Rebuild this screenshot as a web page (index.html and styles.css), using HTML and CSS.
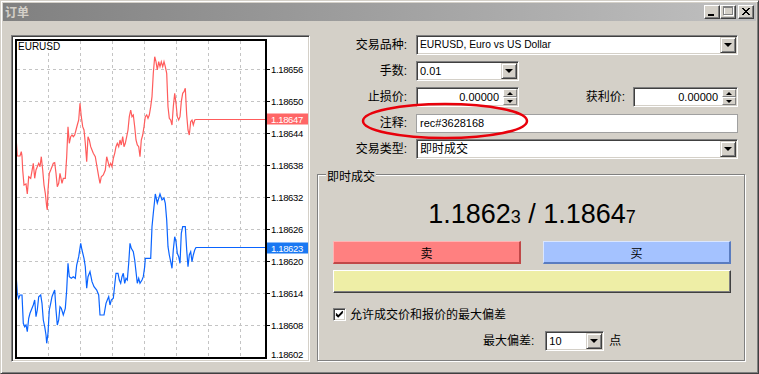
FILE: index.html
```html
<!DOCTYPE html>
<html lang="zh">

<head>
  <meta charset="UTF-8" />
  <title>订单</title>
  <link rel="stylesheet" href="styles.css">
</head>

<body>
  <div class="window">
    <!-- title bar -->
    <div class="titlebar">
      <span class="title">订单</span>
      <div class="caption-btns">
        <span class="cap-btn"><svg width="14" height="12" viewBox="0 0 14 12"><rect x="3" y="8" width="6" height="2" fill="#000"/></svg></span>
        <span class="cap-btn"><svg width="14" height="12" viewBox="0 0 14 12"><rect x="3.5" y="1.5" width="9" height="8" fill="none" stroke="#fff"/><rect x="2.5" y="0.5" width="9" height="8" fill="none" stroke="#808080"/><line x1="2" y1="1.5" x2="12" y2="1.5" stroke="#808080"/></svg></span>
        <span class="cap-btn close"><svg width="14" height="12" viewBox="0 0 14 12"><path d="M3 2 L10 9 M10 2 L3 9 M4 2 L11 9 M11 2 L4 9" stroke="#000" stroke-width="1"/></svg></span>
      </div>
    </div>

    <div class="content">
      <!-- tick chart -->
      <div class="chart-frame">
        <svg class="chart" width="295" height="323" viewBox="13 37 295 323">
          <path class="grid" d="M48.5 41V357M80.5 41V357M112.5 41V357M144.5 41V357M176.5 41V357M208.5 41V357M240.5 41V357
            M17 69.5H265M17 101.5H265M17 133.5H265M17 165.5H265M17 197.5H265M17 229.5H265M17 261.5H265M17 293.5H265M17 325.5H265"/>
          <path class="ticks" d="M267 69.5h3M267 101.5h3M267 133.5h3M267 165.5h3M267 197.5h3M267 229.5h3M267 261.5h3M267 293.5h3M267 325.5h3"/>
          <text x="18" y="46" class="sym">EURUSD</text>

          <polyline class="ask" points="16,136 17.3,156 20,156 21.3,151.7 22,156 22.7,170 24,185 26,184 27.3,194 28.7,176.7 30.7,178.3 33.3,163.3 34.7,178.3 36,170 38.7,163.3 40,166.7 41.3,156.7 42.7,170 44,185 45.3,193.3 46.7,206.7 47.3,210 48,190 49.3,173.3 50.7,170 52,166.7 53.3,163.3 54.7,162.7 56,173.3 57.3,186.7 58.7,183.3 60,173.3 62,183.3 63.3,178.3 65.3,178.3 66.7,156.7 68,126.7 69.3,143.3 70.7,136.7 72,135 73.3,136.7 74.7,135 76,130 77.3,125 78.7,120 80,103.3 81.3,116.7 82.7,126.7 84,130 85.3,143.3 86.7,161.7 88,136.7 89.3,140 90.7,146.7 92,150 93.3,153.3 95.3,156.7 96.7,165 98.7,176.7 100,183.3 101.3,176.7 103.3,175 105.3,170 106.7,156.7 108,161.7 109.3,166.7 110.7,163.3 112,166.7 113.3,158.3 114.7,153.3 116,146.7 117.3,143.3 118.7,146.7 120,140 121.3,145 122.7,136.7 124,146.7 125.3,143.3 126.7,136.7 128,130 129.3,116.7 130.7,110 132,116.7 133.3,115 134.7,126.7 136,140 137.3,145 138.7,146.7 140,156.7 141.3,140 142.7,135 144,126.7 145.3,116.7 146.7,115 148,118.3 149.3,115 150.7,106.7 152,96.7 153.3,73.3 154.7,56.7 156,61.7 157.3,70 158.7,61.7 160,66.7 161.3,61.7 162.7,66.7 164,61.7 165.3,66.7 166.7,73.3 168,106.7 169.3,118.3 170.7,120 172,125 173.3,106.7 174.7,93.3 176,103.3 177.3,116.7 178.7,120 180,116.7 181.3,101.7 182.7,93.3 184,91.7 185.3,88.3 186.7,115 188,130 189.3,135 190.7,121.7 192,120 193.3,125 194.7,120 196,119.5 265,119.5"/>
          <polyline class="bid" points="16,273.3 17.3,293.3 18.7,298.3 20,295 22,295 23.3,323.3 24.7,326.7 26,325 27.3,331.7 28.7,318.3 30,313.3 31.3,310 33.3,305 34.7,300 36,316.7 37.3,310 38.7,296.7 40.7,295 42,303.3 43.3,320 44.7,326.7 46,335 46.7,343.3 48,333.3 49.3,310 50.7,303.3 52,296.7 53.3,293.3 54.7,290 56,310 57.3,325 58.7,320 60,306.7 61.3,308.3 63.3,315 65.3,308.3 66.7,290 68,263.3 69.3,276.7 71.3,278.3 73.3,276.7 75.3,278.3 76.7,265 78.7,256.7 80.7,243.3 82,250 84,258.3 85.3,266.7 86.7,288.3 88,276.7 90,271.7 92,281.7 94,286.7 96.7,290 98.7,295 100,315 104,315 106,303.3 107.3,300 108.7,296.7 110,305 111.3,300 113.3,298.3 114.7,285 116,273.3 118,273.3 119.3,280 120.7,283.3 122,276.7 123.3,273.3 124.7,283.3 126,278.3 127.3,280 128.7,263.3 130,243.3 131.3,248.3 133.3,251.7 134.7,260 136,271.7 137.3,283.3 138.7,278.3 140,283.3 142,280 143.3,276.7 144.7,266.7 145.3,258.3 150.7,258.3 152,226.7 153.3,213.3 154.7,200 155.3,194 157.3,203 160,194 162,200 164,198 165.3,203.3 166.7,220 168,246.7 169.3,255 170.7,261.7 172,268.3 173.3,250 174.7,236.7 176,241.7 177.3,253.3 178.7,256.7 180,263.3 181.3,233.3 182.7,226.7 185.3,226.7 186.7,250 188,266.7 189.3,255 190.7,251.7 192,261.7 193.3,255 194.7,250 196,247.5 265,247.5"/>

          <rect x="16" y="40" width="250" height="318" class="frame"/>

          <g class="axis">
            <text x="271" y="69.5">1.18656</text>
            <text x="271" y="101.5">1.18650</text>
            <text x="271" y="133.5">1.18644</text>
            <text x="271" y="165.5">1.18638</text>
            <text x="271" y="197.5">1.18632</text>
            <text x="271" y="229.5">1.18626</text>
            <text x="271" y="261.5">1.18620</text>
            <text x="271" y="293.5">1.18614</text>
            <text x="271" y="325.5">1.18608</text>
            <text x="271" y="354">1.18602</text>
          </g>
          <rect x="267" y="113.5" width="41" height="11" class="tag-ask"/>
          <text x="271" y="119.5" class="axis tag-text">1.18647</text>
          <rect x="267" y="242.5" width="41" height="11" class="tag-bid"/>
          <text x="271" y="248.5" class="axis tag-text">1.18623</text>
        </svg>
      </div>

      <!-- order form -->
      <div class="side">
        <div class="form">
          <div class="row">
            <label>交易品种:</label>
            <div class="field w-full"><span class="val sym-name">EURUSD, Euro vs US Dollar</span><span class="drop"><i class="arrow"></i></span></div>
          </div>
          <div class="row">
            <label>手数:</label>
            <div class="field w-small"><span class="val">0.01</span><span class="drop"><i class="arrow"></i></span></div>
          </div>
          <div class="row">
            <label>止损价:</label>
            <div class="field w-small num"><span class="val">0.00000</span><span class="spin"><b><i class="up"></i></b><b><i class="down"></i></b></span></div>
            <label class="tp">获利价:</label>
            <div class="field w-tp num"><span class="val">0.00000</span><span class="spin"><b><i class="up"></i></b><b><i class="down"></i></b></span></div>
          </div>
          <div class="row">
            <label>注释:</label>
            <div class="field flat w-full"><span class="val">rec#3628168</span></div>
          </div>
          <div class="row">
            <label>交易类型:</label>
            <div class="field w-full"><span class="val cjk">即时成交</span><span class="drop"><i class="arrow"></i></span></div>
          </div>
        </div>

        <div class="group">
          <span class="legend">即时成交</span>
          <div class="quote">1.1862<small>3</small> / 1.1864<small>7</small></div>
          <div class="trade-btns">
            <button class="sell">卖</button>
            <button class="buy">买</button>
          </div>
          <div class="yellow-bar"></div>
          <div class="check-row">
            <span class="checkbox"><svg width="9" height="9" viewBox="0 0 9 9"><path d="M1 3.5 L3.2 5.8 L7.8 1.2 M1 4.8 L3.2 7 L7.8 2.4" stroke="#000" stroke-width="1.2" fill="none"/></svg></span>
            <span>允许成交价和报价的最大偏差</span>
          </div>
          <div class="dev-row">
            <span>最大偏差:</span>
            <div class="field w-dev"><span class="val">10</span><span class="drop"><i class="arrow"></i></span></div>
            <span>点</span>
          </div>
        </div>
      </div>
    </div>

    <!-- red marker round the comment field -->
    <svg class="marker" width="172" height="40" viewBox="0 0 172 40">
      <ellipse cx="85" cy="20" rx="82" ry="17" fill="none" stroke="#e8000b" stroke-width="2.5"/>
    </svg>
  </div>
</body>

</html>
```

FILE: styles.css
```css
body {
  margin: 0;
  background-color: #d4d0c8;
  font-family: "Liberation Sans", "Noto Sans CJK SC", sans-serif;
  font-size: 11px;
  color: #000;
}

.window {
  position: relative;
  width: 759px;
  height: 374px;
  box-sizing: border-box;
  border: 1px solid;
  border-color: #d4d0c8 #404040 #404040 #d4d0c8;
  box-shadow: inset 1px 1px #fff, inset -1px -1px #808080;
  padding: 2px;
  background-color: #d4d0c8;
  display: flex;
  flex-direction: column;
}

/* ---------- title bar ---------- */
.titlebar {
  height: 18px;
  flex: none;
  display: flex;
  align-items: center;
  justify-content: space-between;
  padding: 0 2px;
  background: linear-gradient(to right, #808080, #c0c0c0);
}

.title {
  color: #d4d0c8;
  font: bold 12px/18px "Noto Sans CJK SC", sans-serif;
}

.caption-btns {
  display: flex;
}

.cap-btn {
  width: 16px;
  height: 14px;
  box-sizing: border-box;
  background-color: #d4d0c8;
  border: 1px solid;
  border-color: #fff #404040 #404040 #fff;
  box-shadow: inset -1px -1px #808080;
  display: flex;
}

.cap-btn.close {
  margin-left: 2px;
}

/* ---------- layout ---------- */
.content {
  flex: 1;
  display: flex;
  gap: 7px;
  padding: 14px 0 0 8px;
}

.chart-frame {
  width: 299px;
  height: 327px;
  box-sizing: border-box;
  padding: 1px;
  background-color: #fff;
  border: 1px solid;
  border-color: #808080 #fff #fff #808080;
  box-shadow: inset 1px 1px #404040, inset -1px -1px #d4d0c8;
}

.chart {
  display: block;
}

.chart .grid {
  stroke: #c4c4c4;
  stroke-dasharray: 3 3;
  fill: none;
}

.chart .ticks {
  stroke: #000;
}

.chart .frame {
  fill: none;
  stroke: #000;
  stroke-width: 2;
}

.chart .sym {
  font: 10px "Liberation Sans", sans-serif;
  dominant-baseline: central;
}

.chart .axis text,
.chart text.axis {
  font: 9.5px "Liberation Sans", sans-serif;
  letter-spacing: -0.35px;
  dominant-baseline: central;
}

.chart .ask {
  fill: none;
  stroke: #ff5c5c;
  stroke-width: 1.2;
}

.chart .bid {
  fill: none;
  stroke: #0a64ff;
  stroke-width: 1.2;
}

.tag-ask {
  fill: #ff6666;
}

.tag-bid {
  fill: #1a78f2;
}

.chart .tag-text {
  fill: #fff;
}

.side {
  width: 428px;
  flex: none;
  display: flex;
  flex-direction: column;
}

/* ---------- form rows ---------- */
.form {
  display: flex;
  flex-direction: column;
  gap: 6px;
  padding-right: 7px;
}

.row {
  display: flex;
  align-items: center;
  height: 20px;
}

.row label {
  width: 90px;
  margin-right: 9px;
  text-align: right;
  font-size: 12px;
  line-height: 14px;
  white-space: nowrap;
}

.row label.tp {
  width: auto;
  flex: 1;
  margin-right: 8px;
}

.field {
  height: 20px;
  box-sizing: border-box;
  background-color: #fff;
  border: 1px solid;
  border-color: #808080 #fff #fff #808080;
  box-shadow: inset 1px 1px #404040, inset -1px -1px #d4d0c8;
  display: flex;
  align-items: center;
  padding: 0 1px 0 3px;
}

.field.flat {
  height: 19px;
  border-color: #a0a0a0;
  box-shadow: none;
}

.field.num {
  justify-content: flex-end;
}

.val {
  line-height: 14px;
  white-space: nowrap;
}

.val.sym-name {
  font-size: 10.3px;
}

.val.cjk {
  font-size: 12px;
}

.w-full {
  width: 322px;
}

.w-small {
  width: 103px;
}

.w-tp {
  width: 105px;
}

.w-dev {
  width: 59px;
}

.drop {
  width: 16px;
  height: 16px;
  box-sizing: border-box;
  margin-left: auto;
  background-color: #d4d0c8;
  border: 1px solid;
  border-color: #d4d0c8 #404040 #404040 #d4d0c8;
  box-shadow: inset 1px 1px #fff, inset -1px -1px #808080;
  display: flex;
  align-items: center;
  justify-content: center;
}

.arrow {
  width: 0;
  height: 0;
  border-left: 4px solid transparent;
  border-right: 4px solid transparent;
  border-top: 4px solid #000;
}

.spin {
  width: 14px;
  height: 16px;
  margin-left: 4px;
  display: flex;
  flex-direction: column;
}

.spin b {
  height: 8px;
  box-sizing: border-box;
  background-color: #d4d0c8;
  border: 1px solid;
  border-color: #fff #808080 #808080 #fff;
  display: flex;
  align-items: center;
  justify-content: center;
}

.spin .up {
  border-left: 3px solid transparent;
  border-right: 3px solid transparent;
  border-bottom: 3px solid #000;
}

.spin .down {
  border-left: 3px solid transparent;
  border-right: 3px solid transparent;
  border-top: 3px solid #000;
}

/* ---------- market execution group ---------- */
.group {
  position: relative;
  margin-top: 15px;
  border: 1px solid #808080;
  box-shadow: inset 1px 1px #fff, 1px 1px #fff;
  padding: 24px 13px 9px 15px;
  display: flex;
  flex-direction: column;
}

.legend {
  position: absolute;
  left: 8px;
  top: -5px;
  padding: 0 1px;
  background-color: #d4d0c8;
  font-size: 12px;
  line-height: 14px;
}

.quote {
  height: 30px;
  line-height: 30px;
  text-align: center;
  font-size: 27px;
  white-space: nowrap;
}

.quote small {
  font-size: 18px;
}

.trade-btns {
  margin-top: 12px;
  display: flex;
  justify-content: space-between;
}

.trade-btns button {
  width: 188px;
  height: 23px;
  padding: 0;
  font: 12px "Noto Sans CJK SC", sans-serif;
  color: #000;
  border-style: solid;
  border-width: 1px 2px 2px 1px;
}

.sell {
  background-color: #ff8080;
  border-color: #ffb4b4 #c04848 #c04848 #ffb4b4;
}

.buy {
  background-color: #a4c2ff;
  border-color: #dae6ff #5a7cc0 #5a7cc0 #dae6ff;
}

.yellow-bar {
  margin-top: 6px;
  height: 23px;
  box-sizing: border-box;
  background-color: #eeeea6;
  border: 1px solid;
  border-color: #fff #404040 #404040 #fff;
  box-shadow: inset -1px -1px #808080;
}

.check-row {
  margin-top: 15px;
  height: 13px;
  display: flex;
  align-items: center;
  gap: 4px;
  font-size: 12px;
  line-height: 14px;
}

.checkbox {
  width: 13px;
  height: 13px;
  box-sizing: border-box;
  background-color: #fff;
  border: 1px solid;
  border-color: #808080 #fff #fff #808080;
  box-shadow: inset 1px 1px #404040, inset -1px -1px #d4d0c8;
  display: flex;
  align-items: center;
  justify-content: center;
}

.dev-row {
  margin-top: 10px;
  margin-left: 150px;
  display: flex;
  align-items: center;
  font-size: 12px;
  line-height: 14px;
}

.dev-row .field {
  margin-left: 11px;
  margin-right: 5px;
  font-size: 11px;
}

/* annotation ellipse drawn over the comment row */
.marker {
  position: absolute;
  left: 359px;
  top: 100px;
}
```
